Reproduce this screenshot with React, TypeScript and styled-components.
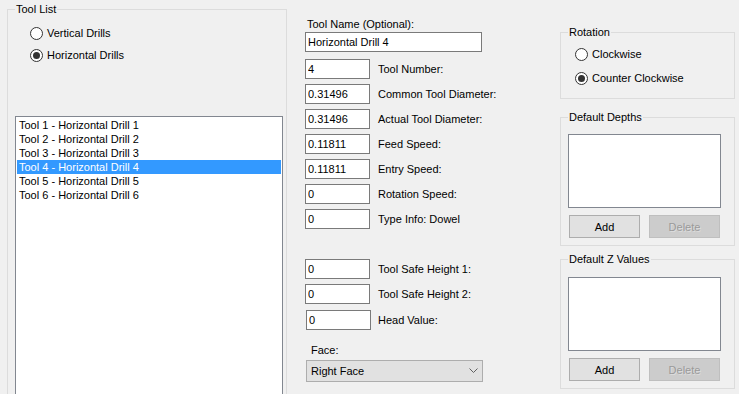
import React from 'react';
import styled, { createGlobalStyle } from 'styled-components';

const Global = createGlobalStyle`
  html, body { margin: 0; padding: 0; background: #f0f0f0; overflow: hidden; }
  body { font-family: "Liberation Sans", Arial, sans-serif; font-size: 11px; color: #000; }
`;

const Page = styled.div`
  display: flex;
  align-items: flex-start;
  width: 739px;
  height: 394px;
  overflow: hidden;
  box-sizing: border-box;
  padding-left: 7px;
`;

const Group = styled.div<{ $w: number; $h: number; $mt?: number }>`
  box-sizing: border-box;
  width: ${(p) => p.$w}px;
  height: ${(p) => p.$h}px;
  margin-top: ${(p) => p.$mt ?? 0}px;
  border: 1px solid #dcdcdc;
  display: flex;
  flex-direction: column;
  flex-shrink: 0;
`;

const Legend = styled.div`
  align-self: flex-start;
  margin: -7px 0 0 7px;
  padding: 0 1px;
  background: #f0f0f0;
  line-height: 13px;
  height: 13px;
  white-space: nowrap;
`;

const RadioGroup = styled.div<{ $pl: number; $mt: number; $gap: number }>`
  display: flex;
  flex-direction: column;
  gap: ${(p) => p.$gap}px;
  padding-left: ${(p) => p.$pl}px;
  margin-top: ${(p) => p.$mt}px;
`;

const RadioRow = styled.div`
  display: flex;
  align-items: center;
  gap: 4px;
  height: 13px;
  line-height: 13px;
  white-space: nowrap;
`;

const RadioCircle = styled.span<{ $checked?: boolean }>`
  box-sizing: border-box;
  width: 13px;
  height: 13px;
  border: 1px solid #333333;
  border-radius: 50%;
  background: #fff;
  display: flex;
  align-items: center;
  justify-content: center;
  flex-shrink: 0;
  &::after {
    content: '';
    width: 7px;
    height: 7px;
    border-radius: 50%;
    background: #333333;
    display: ${(p) => (p.$checked ? 'block' : 'none')};
  }
`;

const ListBox = styled.div<{ $w: number; $h: number; $mt: number }>`
  box-sizing: border-box;
  width: ${(p) => p.$w}px;
  height: ${(p) => p.$h}px;
  margin: ${(p) => p.$mt}px 0 0 7px;
  border: 1px solid #828790;
  background: #fff;
  padding: 1px;
  flex-shrink: 0;
`;

const ListItem = styled.div<{ $selected?: boolean }>`
  height: 14px;
  line-height: 14px;
  padding-left: 2px;
  white-space: nowrap;
  background: ${(p) => (p.$selected ? '#3399ff' : 'transparent')};
  color: ${(p) => (p.$selected ? '#fff' : '#000')};
`;

const Middle = styled.div`
  display: flex;
  flex-direction: column;
  margin-left: 18px;
  width: 255px;
  padding-top: 18px;
  flex-shrink: 0;
`;

const FieldLabel = styled.div<{ $pl: number; $mt?: number }>`
  line-height: 13px;
  height: 13px;
  padding-left: ${(p) => p.$pl}px;
  margin-top: ${(p) => p.$mt ?? 0}px;
  white-space: nowrap;
`;

const TextBox = styled.input<{ $w: number; $ml?: number }>`
  box-sizing: border-box;
  width: ${(p) => p.$w}px;
  height: 20px;
  margin: 0 0 0 ${(p) => p.$ml ?? 0}px;
  border: 1px solid #7a7a7a;
  background: #fff;
  padding: 0 0 0 2px;
  font: inherit;
  color: #000;
  outline: none;
  flex-shrink: 0;
`;

const NameRow = styled.div`
  margin-top: 1px;
  display: flex;
`;

const FieldRow = styled.div<{ $mt: number }>`
  display: flex;
  align-items: center;
  margin-top: ${(p) => p.$mt}px;
  height: 20px;
`;

const RowLabel = styled.span<{ $ml: number }>`
  margin-left: ${(p) => p.$ml}px;
  white-space: nowrap;
`;

const Combo = styled.div`
  box-sizing: border-box;
  width: 177px;
  height: 22px;
  margin: 3px 0 0 1px;
  border: 1px solid #adadad;
  background: #e1e1e1;
  display: flex;
  align-items: center;
  justify-content: space-between;
  padding: 0 4px 0 4px;
`;

const Right = styled.div`
  display: flex;
  flex-direction: column;
  width: 175px;
  flex-shrink: 0;
`;

const ButtonRow = styled.div`
  display: flex;
  gap: 9px;
  margin: 7px 0 0 8px;
`;

const Btn = styled.button<{ $disabled?: boolean }>`
  box-sizing: border-box;
  width: 71px;
  height: 23px;
  padding: 0;
  font: inherit;
  border: 1px solid ${(p) => (p.$disabled ? '#bfbfbf' : '#adadad')};
  background: ${(p) => (p.$disabled ? '#cccccc' : '#e1e1e1')};
  color: ${(p) => (p.$disabled ? '#9a9a9a' : '#000')};
  text-shadow: ${(p) => (p.$disabled ? '1px 1px 0 rgba(255,255,255,0.35)' : 'none')};
`;

const tools = [1, 2, 3, 4, 5, 6];

const fields: { value: string; label: string; mt: number; ml?: number }[] = [
  { value: '4', label: 'Tool Number:', mt: 7 },
  { value: '0.31496', label: 'Common Tool Diameter:', mt: 5 },
  { value: '0.31496', label: 'Actual Tool Diameter:', mt: 5 },
  { value: '0.11811', label: 'Feed Speed:', mt: 5 },
  { value: '0.11811', label: 'Entry Speed:', mt: 5 },
  { value: '0', label: 'Rotation Speed:', mt: 5 },
  { value: '0', label: 'Type Info: Dowel', mt: 5 },
  { value: '0', label: 'Tool Safe Height 1:', mt: 30 },
  { value: '0', label: 'Tool Safe Height 2:', mt: 5 },
  { value: '0', label: 'Head Value:', mt: 6, ml: 1 },
];

const Chevron = () => (
  <svg width="9" height="6" viewBox="0 0 9 6">
    <path d="M0.5 0.5 L4.5 4.5 L8.5 0.5" fill="none" stroke="#606060" strokeWidth="1" />
  </svg>
);

export default function App() {
  return (
    <>
      <Global />
      <Page>
        <Group $w={280} $h={420} $mt={9}>
          <Legend>Tool List</Legend>
          <RadioGroup $pl={22} $mt={11} $gap={9}>
            <RadioRow>
              <RadioCircle />
              Vertical Drills
            </RadioRow>
            <RadioRow>
              <RadioCircle $checked />
              Horizontal Drills
            </RadioRow>
          </RadioGroup>
          <ListBox $w={268} $h={320} $mt={54}>
            {tools.map((n) => (
              <ListItem key={n} $selected={n === 4}>
                Tool {n} - Horizontal Drill {n}
              </ListItem>
            ))}
          </ListBox>
        </Group>

        <Middle>
          <FieldLabel $pl={2}>Tool Name (Optional):</FieldLabel>
          <NameRow>
            <TextBox $w={177} readOnly value="Horizontal Drill 4" />
          </NameRow>
          {fields.map((f, i) => (
            <FieldRow key={i} $mt={f.mt}>
              <TextBox $w={65} $ml={f.ml} readOnly value={f.value} />
              <RowLabel $ml={8 - (f.ml ?? 0)}>{f.label}</RowLabel>
            </FieldRow>
          ))}
          <FieldLabel $pl={6} $mt={14}>Face:</FieldLabel>
          <Combo>
            <span>Right Face</span>
            <Chevron />
          </Combo>
        </Middle>

        <Right>
          <Group $w={175} $h={67} $mt={32}>
            <Legend>Rotation</Legend>
            <RadioGroup $pl={14} $mt={9} $gap={11}>
              <RadioRow>
                <RadioCircle />
                Clockwise
              </RadioRow>
              <RadioRow>
                <RadioCircle $checked />
                Counter Clockwise
              </RadioRow>
            </RadioGroup>
          </Group>
          <Group $w={175} $h={129} $mt={18}>
            <Legend>Default Depths</Legend>
            <ListBox $w={153} $h={74} $mt={10} />
            <ButtonRow>
              <Btn>Add</Btn>
              <Btn $disabled>Delete</Btn>
            </ButtonRow>
          </Group>
          <Group $w={175} $h={130} $mt={13}>
            <Legend>Default Z Values</Legend>
            <ListBox $w={153} $h={74} $mt={11} />
            <ButtonRow>
              <Btn>Add</Btn>
              <Btn $disabled>Delete</Btn>
            </ButtonRow>
          </Group>
        </Right>
      </Page>
    </>
  );
}
